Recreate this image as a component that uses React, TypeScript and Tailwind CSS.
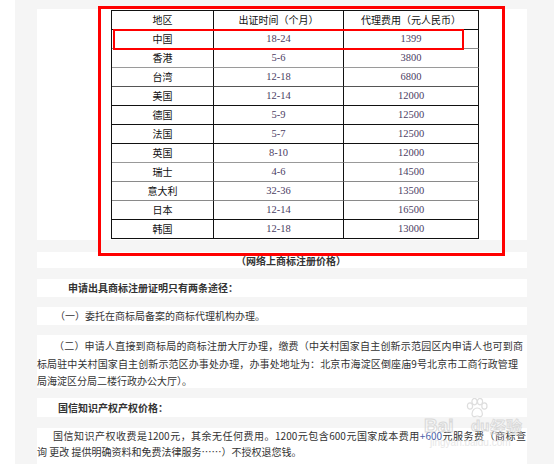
import React from 'react';

const rows: { region: string; months: string; fee: string; line: string }[] = [
  { region: '中国', months: '18-24', fee: '1399', line: 'border-b-[#8a8a8a]' },
  { region: '香港', months: '5-6', fee: '3800', line: 'border-b-[#9a9a9a]' },
  { region: '台湾', months: '12-18', fee: '6800', line: 'border-b-[#555]' },
  { region: '美国', months: '12-14', fee: '12000', line: 'border-b-[#111]' },
  { region: '德国', months: '5-9', fee: '12500', line: 'border-b-[#111]' },
  { region: '法国', months: '5-7', fee: '12500', line: 'border-b-[#111]' },
  { region: '英国', months: '8-10', fee: '12000', line: 'border-b-[#999]' },
  { region: '瑞士', months: '4-6', fee: '14500', line: 'border-b-[#8a8a8a]' },
  { region: '意大利', months: '32-36', fee: '13500', line: 'border-b-[#8a8a8a]' },
  { region: '日本', months: '12-14', fee: '16500', line: 'border-b-[#111]' },
  { region: '韩国', months: '12-18', fee: '13000', line: 'border-b-[#111]' },
];

function PriceTable() {
  return (
    <div className="ml-[74px] mt-[1px] w-[368px] border-l border-t border-[#111]">
      <div className="grid grid-cols-[102px_130px_135px]">
        <div className="h-[19px] border-r border-b border-[#111] text-center leading-[18px] text-[#111]">地区</div>
        <div className="h-[19px] border-r border-b border-[#111] text-center leading-[18px] text-[#111]">出证时间（个月）</div>
        <div className="h-[19px] border-r border-b border-[#111] text-center leading-[18px] text-[#111]">代理费用（元人民币）</div>
      </div>
      {rows.map((r) => (
        <div key={r.region} className="grid grid-cols-[102px_130px_135px]">
          <div className={`h-[19px] border-r border-r-[#111] border-b ${r.line} text-center leading-[18px] text-[#111]`}>
            {r.region}
          </div>
          <div className={`h-[19px] border-r border-r-[#111] border-b ${r.line} text-center font-['Liberation_Serif',serif] text-[10.5px] leading-[18px] text-[#4b3d63]`}>
            {r.months}
          </div>
          <div className={`h-[19px] border-r border-r-[#111] border-b ${r.line} text-center font-['Liberation_Serif',serif] text-[10.5px] leading-[18px] text-[#4b3d63]`}>
            {r.fee}
          </div>
        </div>
      ))}
    </div>
  );
}

function Watermark() {
  return (
    <div className="pointer-events-none absolute left-[424px] top-[396px] h-[56px] w-[104px] opacity-80">
      <svg className="absolute left-[42px] top-[2px]" width="22" height="20" viewBox="0 0 22 20" fill="none" stroke="#d6d6d6" strokeWidth="1.2">
        <ellipse cx="4" cy="8" rx="2.6" ry="3.2" />
        <ellipse cx="8.5" cy="3.6" rx="2.6" ry="3.2" />
        <ellipse cx="14" cy="3.6" rx="2.6" ry="3.2" />
        <ellipse cx="18.4" cy="8" rx="2.6" ry="3.2" />
        <path d="M6 16c0-3.5 2.6-6 5.2-6s5.2 2.5 5.2 6c0 2-1.6 3-3 2.6-1-.3-1.4-.6-2.2-.6s-1.2.3-2.2.6C7.6 19 6 18 6 16z" />
      </svg>
      <div className="absolute left-0 top-[20px] font-['Liberation_Sans',sans-serif] text-[19px] font-bold leading-[20px] text-transparent [-webkit-text-stroke:1px_#d2d2d2]">
        Bai
      </div>
      <div className="absolute left-[47px] top-[22px] font-['Liberation_Sans',sans-serif] text-[15px] font-bold leading-[16px] text-transparent [-webkit-text-stroke:1px_#d2d2d2]">
        du
      </div>
      <div className="absolute left-[66px] top-[21px] text-[16px] font-bold leading-[18px] text-transparent [-webkit-text-stroke:0.8px_#d2d2d2]">
        经验
      </div>
      <div className="absolute left-[6px] top-[41px] font-['Liberation_Sans',sans-serif] text-[10px] leading-[12px] text-[#e2e2e2]">
        jingyan.baidu.com
      </div>
    </div>
  );
}

export default function App() {
  return (
    <div className="relative h-[464px] w-[554px] overflow-hidden bg-white font-['Noto_Sans_CJK_SC',sans-serif] text-[10px] text-[#333]">
      <div className="ml-[15px] flex h-full flex-col bg-[#f5f5f5] pl-[22px] pr-[27px] pt-[9px]">
        <div className="h-[231px] bg-white">
          <PriceTable />
        </div>

        <div className="mt-[12px] h-[16px] bg-white pl-[199px] pt-[1px] font-bold leading-[16px] text-[#333]">
          （网络上商标注册价格）
        </div>

        <div className="mt-[11px] h-[18px] bg-white pl-[31px] font-bold leading-[18px] text-[#333]">
          申请出具商标注册证明只有两条途径：
        </div>

        <div className="mt-[10px] h-[18px] bg-white pl-[18px] leading-[18px]">
          （一）委托在商标局备案的商标代理机构办理。
        </div>

        <div className="mt-[10px] h-[53px] bg-white pt-[2px] leading-[17.5px]">
          <div className="whitespace-nowrap pl-[17px] pr-[4px] [text-align-last:justify]">
            （二）申请人直接到商标局的商标注册大厅办理，缴费（中关村国家自主创新示范园区内申请人也可到商
          </div>
          <div className="whitespace-nowrap pr-[9px] [text-align-last:justify]">
            标局驻中关村国家自主创新示范区办事处办理，办事处地址为：北京市海淀区倒座庙9号北京市工商行政管理
          </div>
          <div className="whitespace-nowrap">局海淀区分局二楼行政办公大厅）。</div>
        </div>

        <div className="mt-[10px] h-[19px] bg-white pl-[21px] font-bold leading-[19px] text-[#333]">
          国信知识产权产权价格：
        </div>

        <div className="mt-[11px] flex-1 bg-white leading-[16px]">
          <div className="whitespace-nowrap pl-[16px] pr-[1px] [text-align-last:justify]">
            国信知识产权收费是1200元，其余无任何费用。1200元包含600元国家成本费用<span className="text-[#4a5fa8]">+600</span>元服务费（商标查
          </div>
          <div className="whitespace-nowrap">询 更改 提供明确资料和免费法律服务……）不授权退您钱。</div>
        </div>
      </div>

      <Watermark />

      {/* red annotation boxes drawn over the screenshot */}
      <div className="pointer-events-none absolute left-[98px] top-[6px] h-[250px] w-[407px] border-[3px] border-[#ff0000]" />
      <div className="pointer-events-none absolute left-[113px] top-[29px] h-[21px] w-[351px] border-2 border-[#ff0000]" />
    </div>
  );
}
